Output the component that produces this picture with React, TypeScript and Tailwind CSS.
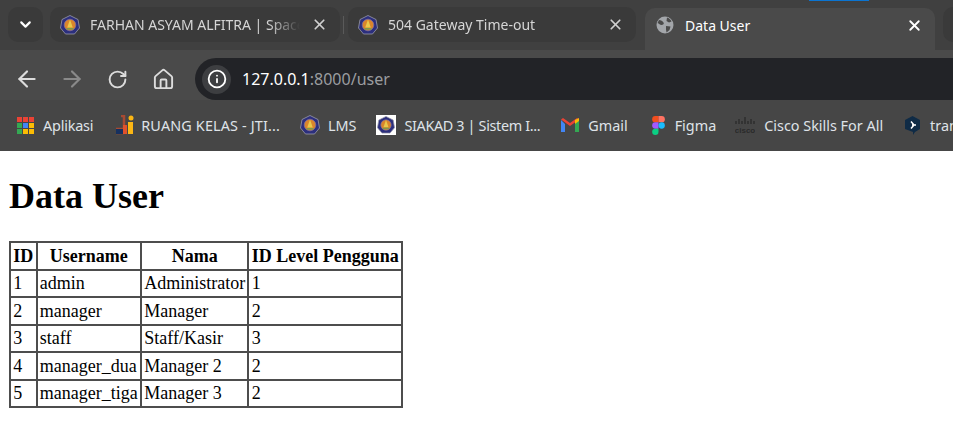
import { ArrowLeft, ArrowRight, ChevronDown, House, Info, RotateCw, X } from 'lucide-react'

const users = [
  { id: 1, username: 'admin', nama: 'Administrator', level: 1 },
  { id: 2, username: 'manager', nama: 'Manager', level: 2 },
  { id: 3, username: 'staff', nama: 'Staff/Kasir', level: 3 },
  { id: 4, username: 'manager_dua', nama: 'Manager 2', level: 2 },
  { id: 5, username: 'manager_tiga', nama: 'Manager 3', level: 2 },
]

// University crest favicon, used on tabs and bookmarks
function Crest({ size = 20 }: { size?: number }) {
  return (
    <svg width={size} height={size} viewBox="0 0 20 20" className="shrink-0">
      <path d="M10 .5 18 4.500 19.500 13 14.500 19H5.500L.5 13 2 4.500Z" fill="#2c2f7d" stroke="#9a9aa8" strokeWidth=".8" />
      <circle cx="10" cy="10" r="5.800" fill="#d9852c" />
      <circle cx="10" cy="10" r="5.800" fill="none" stroke="#7d6fa8" strokeWidth=".7" />
      <path d="M10 4.500 12.800 12.500H7.200Z" fill="#e9c84a" />
      <path d="M6.500 13h7v1.600h-7Z" fill="#7f9a4a" />
    </svg>
  )
}

function GlobeIcon() {
  return (
    <svg width="18" height="18" viewBox="0 0 18 18" className="shrink-0">
      <circle cx="9" cy="9" r="8.500" fill="#a3a6aa" />
      <path d="M3 4c2 0 3.500 1 4.500 2.500S7 9 5.500 9 3 7.500 1.500 7ZM11 1.500c2 .5 3.500 2 4.500 4L13 6.500 10.500 5ZM10 10l4.500.5-1 3.500-3 2.500-.5-3Z" fill="#4a4a4a" />
    </svg>
  )
}

function Tab({ title, icon, width }: { title: string; icon: React.ReactNode; width: string }) {
  return (
    <div className={`flex items-center h-[35px] ${width} bg-[#3a3a3a] rounded-[10px] pl-[10px] text-[#d5d5d5]`}>
      {icon}
      <span className="ml-[10px] flex-1 overflow-hidden whitespace-nowrap text-[14px] [mask-image:linear-gradient(to_right,black_85%,transparent)]">{title}</span>
      <X size={17} strokeWidth={2.4} className="ml-[11px] mr-[12px] shrink-0 text-[#d0d0d0]" />
    </div>
  )
}

function Bookmark({ icon, label, gap = 'ml-[8px]' }: { icon: React.ReactNode; label: string; gap?: string }) {
  return (
    <div className="flex items-center shrink-0 whitespace-nowrap">
      {icon}
      <span className={`${gap} text-[14.4px] text-[#dfe3e8]`}>{label}</span>
    </div>
  )
}

function AppsIcon() {
  const colors = ['#ea4335', '#ea4335', '#ea4335', '#34a853', '#4285f4', '#fbbc04', '#34a853', '#fbbc04', '#fbbc04']
  return (
    <div className="grid grid-cols-3 gap-[1px] w-[17px] h-[17px] shrink-0">
      {colors.map((c, i) => (
        <svg key={i} width="5" height="5"><rect width="5" height="5" fill={c} /></svg>
      ))}
    </div>
  )
}

export default function App() {
  return (
    <div className="h-[433px] w-[953px] overflow-hidden bg-white font-['Noto_Sans',sans-serif]">
      {/* Tab strip */}
      <div className="relative h-[50px] bg-[#404040] flex overflow-hidden">
        <div className="absolute top-0 left-[809px] w-[60px] h-[1px] bg-[#0b74d1]" />
        <div className="ml-[8px] mt-[7px] w-[35px] h-[35px] rounded-[10px] bg-[#3a3a3a] flex items-center justify-center text-white shrink-0">
          <ChevronDown size={17} strokeWidth={3} />
        </div>
        <div className="ml-[7px] mt-[7px] shrink-0">
          <Tab title="FARHAN ASYAM ALFITRA | Space" icon={<Crest />} width="w-[290px]" />
        </div>
        <div className="ml-[3px] mt-[16px] w-[1px] h-[18px] bg-[#5a5a5a] shrink-0" />
        <div className="ml-[4px] mt-[7px] shrink-0">
          <Tab title="504 Gateway Time-out" icon={<Crest />} width="w-[288px]" />
        </div>
        <div className="ml-[9px] mt-[8px] h-[42px] w-[290px] shrink-0 bg-[#4a4a4a] rounded-t-[10px] flex items-start pl-[11px] pt-[8px] text-white">
          <div className="h-[18px]"><GlobeIcon /></div>
          <span className="ml-[11px] flex-1 text-[14px] leading-[19px]">Data User</span>
          <X size={17} strokeWidth={2.6} className="mr-[12px] mt-[1px] shrink-0" />
        </div>
        <div className="ml-[8px] mt-[7px] w-[30px] h-[35px] rounded-[10px] bg-[#3a3a3a] shrink-0" />
      </div>

      {/* Toolbar */}
      <div className="h-[50px] bg-[#4a4a4a] flex items-end">
        <div className="h-[42px] flex items-center pl-[14px] text-[#dcdcdc] shrink-0">
          <ArrowLeft size={26} strokeWidth={2} />
          <ArrowRight size={26} strokeWidth={2} className="ml-[19px] text-[#8a8a8a]" />
          <RotateCw size={21} strokeWidth={2.2} className="ml-[22px]" />
          <House size={23} strokeWidth={2} className="ml-[24px]" />
        </div>
        <div className="ml-[20px] flex-1 h-[42px] rounded-l-[21px] bg-[#222327] flex items-center pl-[7px]">
          <div className="w-[29px] h-[29px] rounded-full bg-[#3d3e41] flex items-center justify-center text-white">
            <Info size={20} strokeWidth={2.2} />
          </div>
          <span className="ml-[11px] text-[16px] text-white">127.0.0.1<span className="text-[#9b9da0]">:8000/user</span></span>
        </div>
      </div>

      {/* Bookmarks */}
      <div className="h-[51px] bg-[#464646] flex items-center pl-[17px] overflow-hidden">
        <Bookmark icon={<AppsIcon />} label="Aplikasi" gap="ml-[9px] tracking-[-0.2px]" />
        <div className="ml-[23px]">
          <Bookmark
            icon={
              <svg width="18" height="20" viewBox="0 0 18 20" className="shrink-0">
                <path d="M5 1h3v13H1v4h7" fill="none" stroke="#a84a32" strokeWidth="2.500" />
                <rect x="0" y="14" width="7" height="5" fill="#16305f" />
                <rect x="7" y="10" width="4" height="9" fill="#e0522c" />
                <circle cx="15" cy="3" r="2.500" fill="#fbb614" />
                <rect x="12" y="7" width="5" height="12" fill="#fbb614" />
              </svg>
            }
            label="RUANG KELAS - JTI..."
            gap="ml-[7px] tracking-[0.15px]"
          />
        </div>
        <div className="ml-[20px]"><Bookmark icon={<Crest />} label="LMS" /></div>
        <div className="ml-[20px]">
          <Bookmark
            icon={
              <div className="w-[20px] h-[20px] bg-white shrink-0 flex items-center justify-center"><Crest size={18} /></div>
            }
            label="SIAKAD 3 | Sistem I..."
            gap="ml-[8px] tracking-[-0.35px]"
          />
        </div>
        <div className="ml-[21px]">
          <Bookmark
            icon={
              <svg width="18" height="14" viewBox="0 0 18 14" className="shrink-0">
                <path d="M0 2v12h4V6Z" fill="#4285f4" />
                <path d="M14 6v8h4V2Z" fill="#34a853" />
                <path d="M0 1.500 9 8l9-6.500-2-1.500L9 5 2 0Z" fill="#ea4335" />
                <path d="M14 2 18 0v3l-4 3Z" fill="#fbbc04" />
              </svg>
            }
            label="Gmail"
            gap="ml-[9px]"
          />
        </div>
        <div className="ml-[24px]">
          <Bookmark
            icon={
              <svg width="13" height="19" viewBox="0 0 12 18" className="shrink-0">
                <path d="M3 0h3v6H3a3 3 0 0 1 0-6Z" fill="#f24e1e" />
                <path d="M6 0h3a3 3 0 0 1 0 6H6Z" fill="#ff7262" />
                <path d="M3 6h3v6H3a3 3 0 0 1 0-6Z" fill="#a259ff" />
                <circle cx="9" cy="9" r="3" fill="#1abcfe" />
                <path d="M3 12h3v3a3 3 0 1 1-3-3Z" fill="#0acf83" />
              </svg>
            }
            label="Figma"
            gap="ml-[10px]"
          />
        </div>
        <div className="ml-[19px]">
          <Bookmark
            icon={
              <svg width="20" height="18" viewBox="0 0 20 18" className="shrink-0">
                <path d="M1 5v3M4 3v5M7 5v3M10 1v7M13 5v3M16 3v5M19 5v3" stroke="#2a2a2a" strokeWidth="1.300" />
                <text x="10" y="16.500" textAnchor="middle" fontSize="8" fontWeight="700" fill="#2a2a2a" fontFamily="Liberation Sans, sans-serif">cisco</text>
              </svg>
            }
            label="Cisco Skills For All"
            gap="ml-[9px]"
          />
        </div>
        <div className="ml-[22px]">
          <Bookmark
            icon={
              <svg width="15" height="19" viewBox="0 0 15 19" className="shrink-0">
                <path d="M7.500 0 15 4v9l-5 3-2 3v-3L0 13V4Z" fill="#0f2b46" />
                <path d="M4 9h4M9 5.500 6 9l3 3.500" transform="matrix(-1 0 0 1 15 0)" stroke="#fff" strokeWidth="1.500" fill="none" />
              </svg>
            }
            label="tran"
            gap="ml-[10px]"
          />
        </div>
      </div>

      {/* Page content */}
      <div className="pl-[9px] font-['Liberation_Serif','Times_New_Roman',serif] text-black">
        <h1 className="text-[36px] leading-[41px] font-bold mt-[25px]">Data User</h1>
        <table className="mt-[24px] border-separate border-spacing-0 border-2 border-[#4d4d4d] text-[18px] leading-[20px]">
          <thead>
            <tr>
              {['ID', 'Username', 'Nama', 'ID Level Pengguna'].map((h, i) => (
                <th key={h} className={`px-[2.25px] h-[25.500px] font-bold text-center border-[#4d4d4d] ${i > 0 ? 'border-l-2' : ''}`}>{h}</th>
              ))}
            </tr>
          </thead>
          <tbody>
            {users.map((u) => (
              <tr key={u.id}>
                <td className="px-[2.25px] h-[27.500px] border-t-2 border-[#4d4d4d]">{u.id}</td>
                <td className="px-[2.25px] border-t-2 border-l-2 border-[#4d4d4d]">{u.username}</td>
                <td className="px-[2.25px] border-t-2 border-l-2 border-[#4d4d4d]">{u.nama}</td>
                <td className="px-[2.25px] border-t-2 border-l-2 border-[#4d4d4d]">{u.level}</td>
              </tr>
            ))}
          </tbody>
        </table>
      </div>
    </div>
  )
}
